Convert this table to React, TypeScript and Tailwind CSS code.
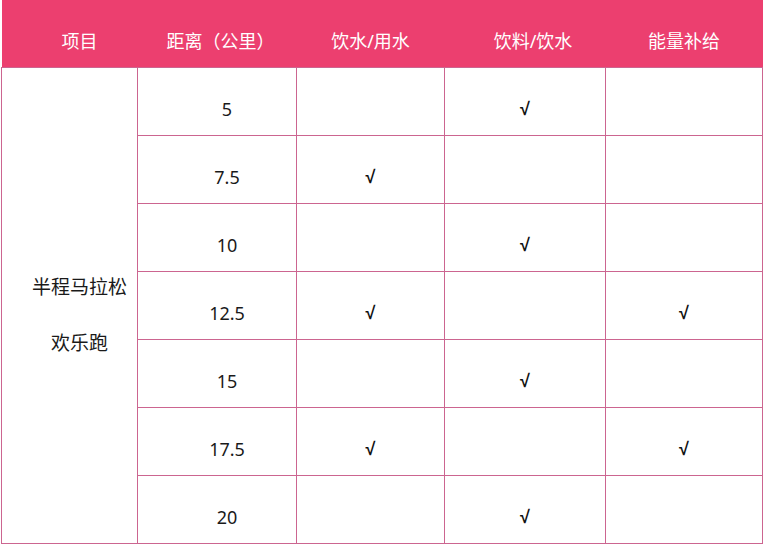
import React from "react";

const rows: { d: string; a: boolean; b: boolean; c: boolean }[] = [
  { d: "5", a: false, b: true, c: false },
  { d: "7.5", a: true, b: false, c: false },
  { d: "10", a: false, b: true, c: false },
  { d: "12.5", a: true, b: false, c: true },
  { d: "15", a: false, b: true, c: false },
  { d: "17.5", a: true, b: false, c: true },
  { d: "20", a: false, b: true, c: false },
];

const Check = ({ on }: { on: boolean }) =>
  on ? (
    <span
      className="text-[18px] font-bold text-[#111]"
      style={{ fontFamily: '"Liberation Sans", sans-serif' }}
    >
      √
    </span>
  ) : null;

export default function App() {
  const td = "border border-[#cc6590] h-[68px] p-0 pt-4 text-center align-middle";
  return (
    <div
      className="w-[765px] h-[547px] bg-white text-[#1a1a1a]"
      style={{ fontFamily: '"Noto Sans", "Noto Sans CJK SC", sans-serif' }}
    >
      <table className="border-collapse table-fixed w-[761px] ml-px text-[18px]">
        <colgroup>
          <col className="w-[136px]" />
          <col className="w-[159px]" />
          <col className="w-[148px]" />
          <col className="w-[161px]" />
          <col className="w-[157px]" />
        </colgroup>
        <thead>
          <tr className="bg-[#ec3f6f] text-white">
            <th className="h-[67px] p-0 pt-4 pl-5 font-normal">项目</th>
            <th className="h-[67px] p-0 pt-4 pl-[7px] font-normal">距离（公里）</th>
            <th className="h-[67px] p-0 pt-4 font-normal">饮水/用水</th>
            <th className="h-[67px] p-0 pt-4 pl-[16px] font-normal">饮料/饮水</th>
            <th className="h-[67px] p-0 pt-4 font-normal">能量补给</th>
          </tr>
        </thead>
        <tbody>
          {rows.map((r, i) => (
            <tr key={r.d}>
              {i === 0 && (
                <td
                  rowSpan={7}
                  className="border border-[#cc6590] p-0 pt-5 pl-5 text-center align-middle text-[19px] leading-[56px]"
                >
                  <div>半程马拉松</div>
                  <div>欢乐跑</div>
                </td>
              )}
              <td className={td + " pl-5"}>{r.d}</td>
              <td className={td}>
                <Check on={r.a} />
              </td>
              <td className={td}>
                <Check on={r.b} />
              </td>
              <td className={td}>
                <Check on={r.c} />
              </td>
            </tr>
          ))}
        </tbody>
      </table>
    </div>
  );
}
